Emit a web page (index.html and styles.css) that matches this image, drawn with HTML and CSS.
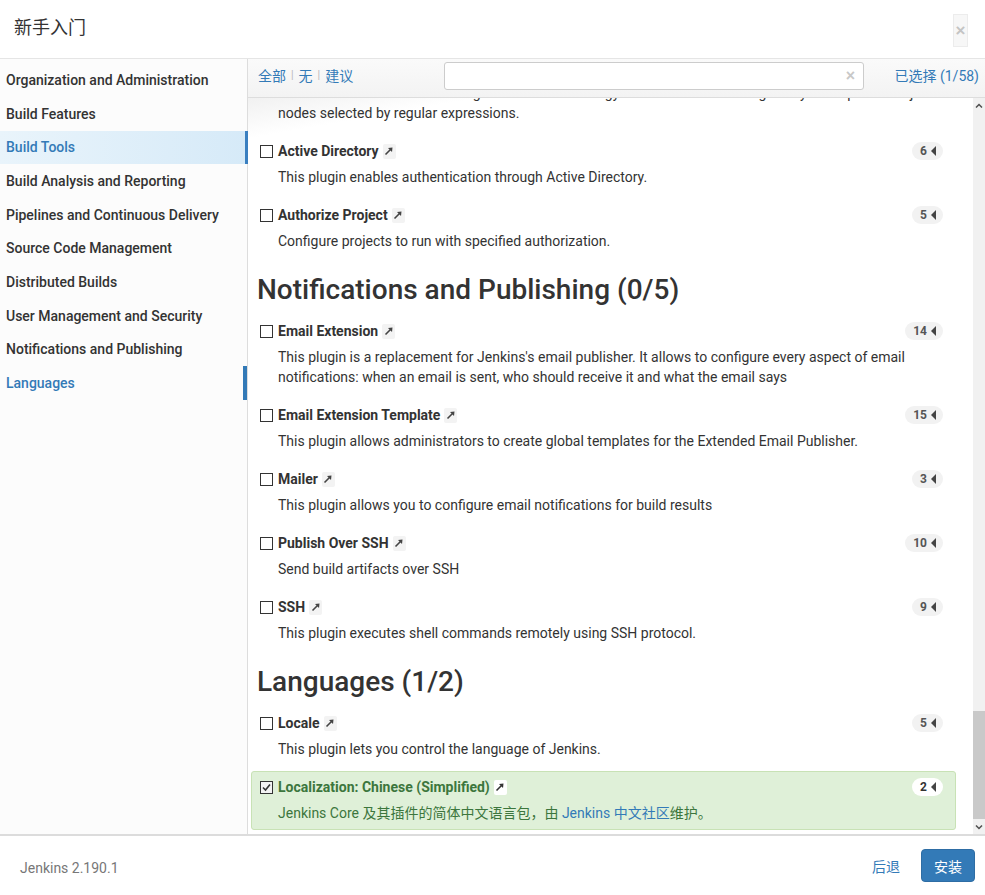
FILE: index.html
```html
<!DOCTYPE html>
<html lang="zh">
<head>
<meta charset="utf-8">
<title>新手入门</title>
<link rel="stylesheet" href="styles.css">
</head>
<body>
<div class="dialog">
  <header class="header">
    <h1 class="title">新手入门</h1>
    <button class="close">×</button>
  </header>
  <div class="body">
    <nav class="sidebar">
      <a class="cat">Organization and Administration</a>
      <a class="cat">Build Features</a>
      <a class="cat active">Build Tools</a>
      <a class="cat">Build Analysis and Reporting</a>
      <a class="cat">Pipelines and Continuous Delivery</a>
      <a class="cat">Source Code Management</a>
      <a class="cat">Distributed Builds</a>
      <a class="cat">User Management and Security</a>
      <a class="cat">Notifications and Publishing</a>
      <a class="cat current">Languages</a>
    </nav>
    <main class="main">
      <div class="toolbar">
        <div class="links">
          <a>全部</a><span class="sep">|</span><a>无</a><span class="sep">|</span><a>建议</a>
        </div>
        <div class="search"><span class="clear">×</span></div>
        <a class="selected-count">已选择 (1/58)</a>
      </div>
      <div class="listwrap">
        <div class="list">
          <div class="list-inner">
            <div class="plugin">
              <div class="row"><span class="cb"></span><span class="ptitle">Role-based Authorization Strategy</span><span class="ext"><svg viewBox="0 0 10 10" width="10" height="10"><path d="M1.5 8.5 L7 3" stroke="#444" stroke-width="1.6"/><path d="M4 2 L8.5 1.5 L8 6 Z" fill="#444"/></svg></span><span class="badge">3<i class="tri"></i></span></div>
              <p class="desc">Enables user authorization using a Role-Based strategy. Roles can be defined globally or for particular jobs or<br>nodes selected by regular expressions.</p>
            </div>
            <div class="plugin">
              <div class="row"><span class="cb"></span><span class="ptitle">Active Directory</span><span class="ext"><svg viewBox="0 0 10 10" width="10" height="10"><path d="M1.5 8.5 L7 3" stroke="#444" stroke-width="1.6"/><path d="M4 2 L8.5 1.5 L8 6 Z" fill="#444"/></svg></span><span class="badge">6<i class="tri"></i></span></div>
              <p class="desc">This plugin enables authentication through Active Directory.</p>
            </div>
            <div class="plugin">
              <div class="row"><span class="cb"></span><span class="ptitle">Authorize Project</span><span class="ext"><svg viewBox="0 0 10 10" width="10" height="10"><path d="M1.5 8.5 L7 3" stroke="#444" stroke-width="1.6"/><path d="M4 2 L8.5 1.5 L8 6 Z" fill="#444"/></svg></span><span class="badge">5<i class="tri"></i></span></div>
              <p class="desc">Configure projects to run with specified authorization.</p>
            </div>
            <h2 class="section">Notifications and Publishing (0/5)</h2>
            <div class="plugin">
              <div class="row"><span class="cb"></span><span class="ptitle">Email Extension</span><span class="ext"><svg viewBox="0 0 10 10" width="10" height="10"><path d="M1.5 8.5 L7 3" stroke="#444" stroke-width="1.6"/><path d="M4 2 L8.5 1.5 L8 6 Z" fill="#444"/></svg></span><span class="badge">14<i class="tri"></i></span></div>
              <p class="desc">This plugin is a replacement for Jenkins's email publisher. It allows to configure every aspect of email<br>notifications: when an email is sent, who should receive it and what the email says</p>
            </div>
            <div class="plugin">
              <div class="row"><span class="cb"></span><span class="ptitle">Email Extension Template</span><span class="ext"><svg viewBox="0 0 10 10" width="10" height="10"><path d="M1.5 8.5 L7 3" stroke="#444" stroke-width="1.6"/><path d="M4 2 L8.5 1.5 L8 6 Z" fill="#444"/></svg></span><span class="badge">15<i class="tri"></i></span></div>
              <p class="desc">This plugin allows administrators to create global templates for the Extended Email Publisher.</p>
            </div>
            <div class="plugin">
              <div class="row"><span class="cb"></span><span class="ptitle">Mailer</span><span class="ext"><svg viewBox="0 0 10 10" width="10" height="10"><path d="M1.5 8.5 L7 3" stroke="#444" stroke-width="1.6"/><path d="M4 2 L8.5 1.5 L8 6 Z" fill="#444"/></svg></span><span class="badge">3<i class="tri"></i></span></div>
              <p class="desc">This plugin allows you to configure email notifications for build results</p>
            </div>
            <div class="plugin">
              <div class="row"><span class="cb"></span><span class="ptitle">Publish Over SSH</span><span class="ext"><svg viewBox="0 0 10 10" width="10" height="10"><path d="M1.5 8.5 L7 3" stroke="#444" stroke-width="1.6"/><path d="M4 2 L8.5 1.5 L8 6 Z" fill="#444"/></svg></span><span class="badge">10<i class="tri"></i></span></div>
              <p class="desc">Send build artifacts over SSH</p>
            </div>
            <div class="plugin">
              <div class="row"><span class="cb"></span><span class="ptitle">SSH</span><span class="ext"><svg viewBox="0 0 10 10" width="10" height="10"><path d="M1.5 8.5 L7 3" stroke="#444" stroke-width="1.6"/><path d="M4 2 L8.5 1.5 L8 6 Z" fill="#444"/></svg></span><span class="badge">9<i class="tri"></i></span></div>
              <p class="desc">This plugin executes shell commands remotely using SSH protocol.</p>
            </div>
            <h2 class="section">Languages (1/2)</h2>
            <div class="plugin">
              <div class="row"><span class="cb"></span><span class="ptitle">Locale</span><span class="ext"><svg viewBox="0 0 10 10" width="10" height="10"><path d="M1.5 8.5 L7 3" stroke="#444" stroke-width="1.6"/><path d="M4 2 L8.5 1.5 L8 6 Z" fill="#444"/></svg></span><span class="badge">5<i class="tri"></i></span></div>
              <p class="desc">This plugin lets you control the language of Jenkins.</p>
            </div>
            <div class="plugin chosen">
              <div class="row"><span class="cb checked"><svg viewBox="0 0 11 11" width="11" height="11"><path d="M2 5.5 L4.5 8 L9 2.5" stroke="#333" stroke-width="1.6" fill="none"/></svg></span><span class="ptitle">Localization: Chinese (Simplified)</span><span class="ext"><svg viewBox="0 0 10 10" width="10" height="10"><path d="M1.5 8.5 L7 3" stroke="#333" stroke-width="1.6"/><path d="M4 2 L8.5 1.5 L8 6 Z" fill="#333"/></svg></span><span class="badge">2<i class="tri"></i></span></div>
              <p class="desc">Jenkins Core 及其插件的简体中文语言包，由 <a class="link">Jenkins 中文社区</a>维护。</p>
            </div>
          </div>
        </div>
        <div class="scrollbar">
          <div class="sb-btn"><svg viewBox="0 0 8 5" width="8" height="5"><path d="M1 4.5 L4 1.5 L7 4.5" stroke="#505050" stroke-width="1.5" fill="none"/></svg></div>
          <div class="sb-track"><div class="sb-thumb"></div></div>
          <div class="sb-btn"><svg viewBox="0 0 8 5" width="8" height="5"><path d="M1 0.5 L4 3.5 L7 0.5" stroke="#505050" stroke-width="1.5" fill="none"/></svg></div>
        </div>
      </div>
    </main>
  </div>
  <footer class="footer">
    <span class="version">Jenkins 2.190.1</span>
    <div class="actions">
      <a class="back">后退</a>
      <button class="install">安装</button>
    </div>
  </footer>
</div>
</body>
</html>
```
FILE: styles.css
```css
* { box-sizing: border-box; }
html, body { margin: 0; padding: 0; }
body {
  font-family: Roboto, "Noto Sans CJK SC", sans-serif;
  font-size: 14px;
  color: #333;
  background: #fff;
  width: 985px;
  height: 895px;
  overflow: hidden;
}
.dialog { display: flex; flex-direction: column; height: 895px; }

.header {
  height: 59px;
  border-bottom: 1px solid #e5e5e5;
  display: flex;
  align-items: center;
  justify-content: space-between;
  padding: 0 17px 0 14px;
  flex: none;
}
.title {
  margin: 0;
  font-family: "Noto Sans CJK SC", sans-serif;
  font-size: 18px;
  font-weight: 400;
  color: #333;
  position: relative;
  top: -3px;
}
.close {
  width: 15px;
  height: 33px;
  padding: 0;
  border: 1px solid #ececec;
  background: #f7f7f7;
  color: #c4c4c4;
  font-family: "Liberation Sans", sans-serif;
  font-weight: 700;
  font-size: 17px;
  line-height: 31px;
  text-align: center;
  margin-top: 2px;
}

.body { flex: 1; display: flex; min-height: 0; }
.sidebar {
  width: 248px;
  flex: none;
  border-right: 1px solid #ddd;
  background: #fcfcfc;
  padding-top: 4.3px;
  display: flex;
  flex-direction: column;
}
.cat {
  height: 33.67px;
  display: flex;
  align-items: center;
  padding-left: 6px;
  font-weight: 500;
  color: #333;
  font-size: 14px;
}
.cat.active {
  background: linear-gradient(to right, #e9f4fb, #d6eaf8);
  color: #337ab7;
  border-right: 3px solid #3a7fc0;
  margin-right: -1px;
}
.cat.current {
  color: #337ab7;
  border-right: 4px solid #337ab7;
  margin-right: 0;
}

.main { flex: 1; display: flex; flex-direction: column; min-width: 0; }
.toolbar {
  height: 39px;
  flex: none;
  border-bottom: 1px solid #ddd;
  background: linear-gradient(to bottom, #fafafa, #f3f3f3);
  display: flex;
  align-items: center;
  padding: 0 6px 0 10px;
}
.links {
  width: 186px;
  display: flex;
  align-items: center;
  color: #337ab7;
  font-size: 14px;
  margin-top: -7px;
}
.links a { color: #337ab7; }
.sep { color: #bbb; font-size: 10px; margin: 0 5px; font-family: "Liberation Sans", sans-serif; }
.search {
  width: 420px;
  height: 28px;
  background: #fff;
  border: 1px solid #ccc;
  border-radius: 3px;
  display: flex;
  align-items: center;
  justify-content: flex-end;
  padding-right: 8px;
  margin-top: -4px;
}
.clear { color: #c8c8c8; font-family: "Liberation Sans", sans-serif; font-weight: 700; font-size: 16px; }
.selected-count { margin-left: auto; color: #337ab7; font-size: 14px; margin-top: -7px; }

.listwrap { flex: 1; display: flex; min-height: 0; }
.list {
  flex: 1;
  overflow: hidden;
  display: flex;
  flex-direction: column;
  justify-content: flex-end;
  padding: 0 17px 4px 3px;
  background: linear-gradient(170deg, #f1f1f1 0, #fff 40px);
}
.list-inner { flex: none; }

.plugin {
  border: 1px solid transparent;
  border-radius: 3px;
  padding: 5px 12px 6px 8px;
  margin-bottom: 5px;
}
.plugin:last-child { margin-bottom: 0; }
.row { display: flex; align-items: center; height: 20px; }
.cb {
  width: 13px;
  height: 13px;
  border: 1px solid #333;
  background: #fff;
  margin-right: 5px;
  flex: none;
  display: flex;
  align-items: center;
  justify-content: center;
}
.cb.checked { background: #f3f3f3; }
.ptitle { font-weight: 700; font-size: 14px; color: #333; }
.ext {
  display: inline-flex;
  align-items: center;
  justify-content: center;
  width: 13px;
  height: 15px;
  background: #f3f3f3;
  border-radius: 2px;
  margin-left: 4px;
}
.badge {
  margin-left: auto;
  height: 18px;
  padding: 0 7px 0 8px;
  border-radius: 9px;
  background: #f2f2f2;
  font-size: 12px;
  font-weight: 700;
  color: #555;
  display: inline-flex;
  align-items: center;
}
.tri {
  display: inline-block;
  width: 0; height: 0;
  border-top: 5px solid transparent;
  border-bottom: 5px solid transparent;
  border-right: 5px solid #444;
  margin-left: 4px;
}
.desc {
  margin: 6px 0 0 18px;
  line-height: 20px;
  font-size: 14px;
  color: #333;
  white-space: nowrap;
}
.section {
  margin: 15px 0 9px 6px;
  font-size: 28px;
  font-weight: 500;
  line-height: 33px;
  color: #333;
}
.plugin.chosen {
  background: #dff0d8;
  border-color: #c8e2b5;
}
.chosen .ptitle, .chosen .desc { color: #3c763d; }
.chosen .ext { background: #fff; }
.chosen .badge { background: #fff; color: #333; }
.link { color: #337ab7; }

.scrollbar {
  width: 12px;
  flex: none;
  background: #f1f1f1;
  display: flex;
  flex-direction: column;
}
.sb-btn { height: 14px; display: flex; align-items: center; justify-content: center; flex: none; }
.sb-track { flex: 1; display: flex; flex-direction: column; justify-content: flex-end; }
.sb-thumb { height: 108px; background: #c9c9c9; margin-bottom: 1px; }

.footer {
  height: 61px;
  flex: none;
  border-top: 2px solid #dcdcdc;
  display: flex;
  align-items: center;
  padding: 0 10px 0 20px;
}
.version { color: #777; font-size: 14px; margin-top: 5px; }
.actions { margin-left: auto; display: flex; align-items: center; gap: 21px; }
.back { color: #337ab7; font-family: "Noto Sans CJK SC", sans-serif; font-size: 14px; }
.install {
  width: 54px;
  height: 33px;
  background: #337ab7;
  border: 1px solid #2e6da4;
  border-radius: 4px;
  color: #fff;
  font-family: "Noto Sans CJK SC", sans-serif;
  font-size: 14px;
  padding: 0;
}
```
